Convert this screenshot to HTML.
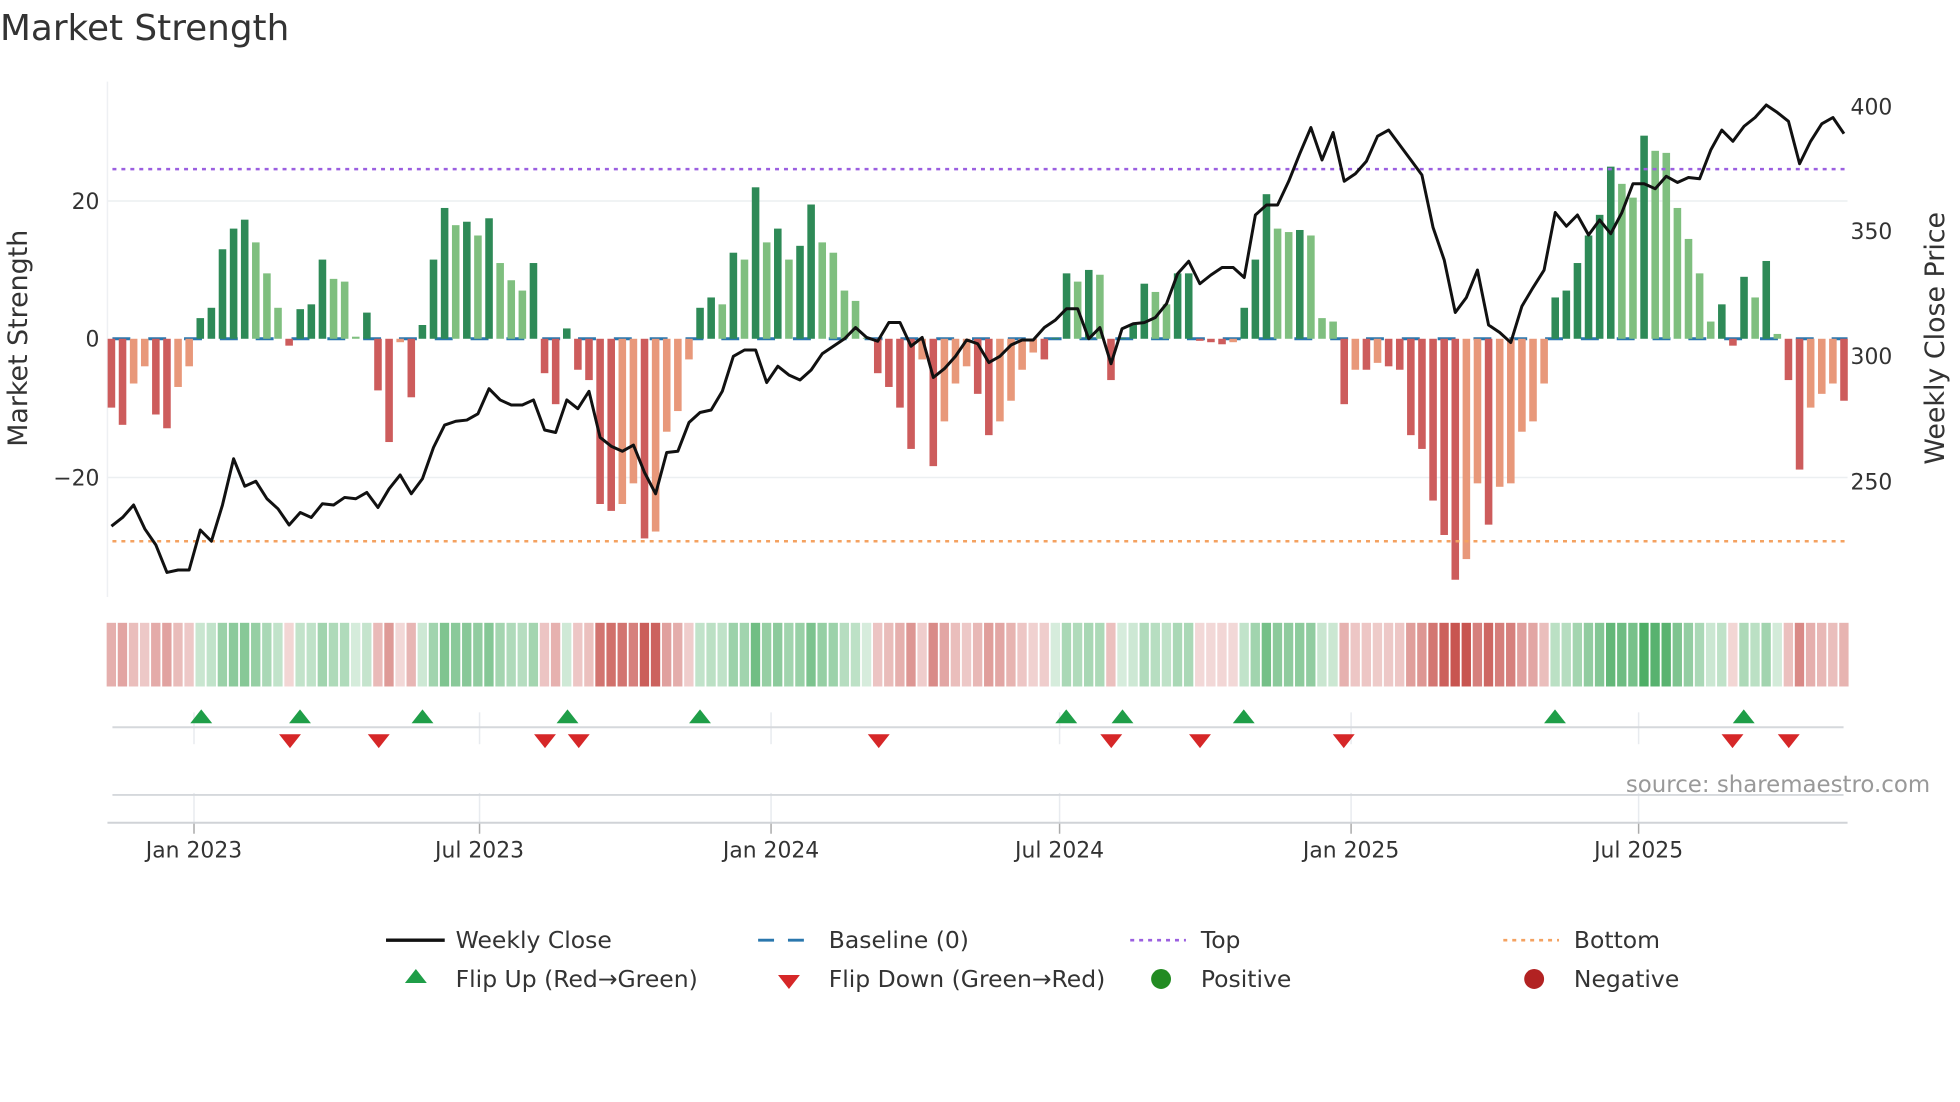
<!DOCTYPE html>
<html><head><meta charset="utf-8"><style>
html,body{margin:0;padding:0;background:#fff;width:1960px;height:1102px;overflow:hidden}
svg{display:block}
text{font-family:"DejaVu Sans","Liberation Sans",sans-serif;fill:#333}
</style></head><body>
<svg id="s" width="1960" height="1102" viewBox="0 0 1960 1102" xmlns="http://www.w3.org/2000/svg">
<g transform="scale(0.99491)">
<text x="0" y="40" font-size="36">Market Strength</text>
<text transform="translate(27,340) rotate(-90)" text-anchor="middle" font-size="27" fill="#444">Market Strength</text>
<text transform="translate(1954,340) rotate(-90)" text-anchor="middle" font-size="27" fill="#444">Weekly Close Price</text>
<text x="1940" y="796" text-anchor="end" font-size="23" fill="#999" style="fill:#999">source: sharemaestro.com</text>
<g id="g"></g>
</g>
</svg>
<script>
var S=1.2564,NS="http://www.w3.org/2000/svg",G=document.getElementById('g');
function el(t,a,txt){var e=document.createElementNS(NS,t);for(var k in a)e.setAttribute(k,a[k]);if(txt!=null)e.textContent=txt;G.appendChild(e);return e;}
var V=[-10,-12.5,-6.5,-4,-11,-13,-7,-4,3,4.5,13,16,17.3,14,9.5,4.5,-1,4.3,5,11.5,8.7,8.3,0.3,3.8,-7.5,-15,-0.5,-8.5,2,11.5,19,16.5,17,15,17.5,11,8.5,7,11,-5,-9.5,1.5,-4.5,-6,-24,-25,-24,-21,-29,-28,-13.5,-10.5,-3,4.5,6,5,12.5,11.5,22,14,16,11.5,13.5,19.5,14,12.5,7,5.5,0,-5,-7,-10,-16,-3,-18.5,-12,-6.5,-4,-8,-14,-12,-9,-4.5,-2,-3,0,9.5,8.3,10,9.3,-6,0,2,8,6.8,5,9.5,9.5,-0.3,-0.5,-0.8,-0.5,4.5,11.5,21,16,15.5,15.8,15,3,2.5,-9.5,-4.5,-4.5,-3.5,-4,-4.5,-14,-16,-23.5,-28.5,-35,-32,-21,-27,-21.5,-21,-13.5,-12,-6.5,6,7,11,15,18,25,22.5,20.5,29.5,27.3,27,19,14.5,9.5,2.5,5,-1,9,6,11.3,0.7,-6,-19,-10,-8,-6.5,-9];
var P=[421,414,404,423,436,458,456,456,424,433,404,367,389,385,399,407,420,410,414,403,404,398,399,394,406,391,380,395,383,358,340,337,336,331,311,320,324,324,320,344,346,320,327,313,350,357,361,356,378,395,362,361,338,330,328,313,285,280,280,306,293,300,304,296,283,277,271,262,270,273,258,258,277,270,302,295,285,272,275,290,285,276,272,272,262,256,247,247,271,262,291,263,259,258,254,243,219,209,227,220,214,214,222,172,164,164,145,123,102,128,106,145,139,129,109,104,116,128,140,182,208,250,238,216,260,266,274,245,230,216,170,181,172,188,176,187,170,147,147,151,141,146,142,143,120,104,113,101,94,84,90,97,131,113,99,94,107];
var X0=112,DX=11.163,Z=340.5,U=6.92,L=108,R=1857;
function xi(i){return X0+DX*i;}
[202,480].forEach(function(y){el('line',{x1:L,x2:R,y1:y,y2:y,stroke:'#eceff1','stroke-width':1.5});});
el('line',{x1:L,x2:L,y1:82,y2:600,stroke:'#eef0f3','stroke-width':1.5});
el('line',{x1:L+5,x2:R,y1:Z,y2:Z,stroke:'#2a77ad','stroke-width':3,'stroke-dasharray':'18 18'});
for(var i=0;i<V.length;i++){var v=V[i],p=i?V[i-1]:0,c;
 if(v>=0)c=(i==0||v>=p)?'#2e8a57':'#7fbf7f';else c=(i==0||v<=p)?'#cd5c5c':'#e8987a';
 var h=Math.abs(v)*U;if(h<1)h=1;
 el('rect',{x:xi(i)-3.8,y:v>=0?Z-h:Z,width:7.6,height:h,fill:c});
 var a=Math.min(1,0.22+Math.abs(v)/30*0.75);
 el('rect',{x:xi(i)-4.8,y:626,width:9.4,height:64,fill:v>=0?'rgb(70,170,95)':'rgb(200,85,80)','fill-opacity':a});
}
el('line',{x1:L+5,x2:R,y1:170,y2:170,stroke:'#9b5fe0','stroke-width':2.6,'stroke-dasharray':'4 5'});
el('line',{x1:L+5,x2:R,y1:544,y2:544,stroke:'#f4a261','stroke-width':2.6,'stroke-dasharray':'4 5'});
var pts=P.map(function(y,i){return xi(i).toFixed(1)+','+(y*S).toFixed(1);}).join(' ');
el('polyline',{points:pts,fill:'none',stroke:'#111','stroke-width':3,'stroke-linejoin':'round'});
[[202,'20'],[340.5,'0'],[480,'\u221220']].forEach(function(t){el('text',{x:100,y:t[0]+8,'text-anchor':'end','font-size':22},t[1]);});
[[107,'400'],[232,'350'],[358,'300'],[484,'250']].forEach(function(t){el('text',{x:1860,y:t[0]+8,'font-size':22},t[1]);});
var TX=[195,482,775,1065,1358,1647],TL=['Jan 2023','Jul 2023','Jan 2024','Jul 2024','Jan 2025','Jul 2025'];
TX.forEach(function(x,k){el('line',{x1:x,x2:x,y1:716,y2:748,stroke:'#e8ebef','stroke-width':1.5});el('line',{x1:x,x2:x,y1:797,y2:827,stroke:'#e8ebef','stroke-width':1.5});
 el('line',{x1:x,x2:x,y1:827,y2:838,stroke:'#aaa','stroke-width':1.5});el('text',{x:x,y:862,'text-anchor':'middle','font-size':22},TL[k]);});
el('line',{x1:113,x2:1853,y1:731,y2:731,stroke:'#d5d8dc','stroke-width':2});
el('line',{x1:113,x2:1853,y1:799,y2:799,stroke:'#d5d8dc','stroke-width':2});
el('line',{x1:108,x2:1857,y1:827,y2:827,stroke:'#d0d3d7','stroke-width':2});
function up(x,y,c){el('polygon',{points:(x-11)+','+(y+7)+' '+(x+11)+','+(y+7)+' '+x+','+(y-7),fill:c});}
function dn(x,y,c){el('polygon',{points:(x-11)+','+(y-7)+' '+(x+11)+','+(y-7)+' '+x+','+(y+7),fill:c});}
[161,240,338,454,560,853,898,995,1244,1395].forEach(function(x){up(x*S,720,'#1f9e48');});
[232,303,436,463,703,889,960,1075,1386,1431].forEach(function(x){dn(x*S,745,'#d62728');});
var r1=945,r2=984,F=23.6;
el('line',{x1:388,x2:447,y1:r1,y2:r1,stroke:'#111','stroke-width':3.5});
el('text',{x:458,y:r1+8,'font-size':F},'Weekly Close');
el('line',{x1:762,x2:820,y1:r1,y2:r1,stroke:'#2a77ad','stroke-width':3,'stroke-dasharray':'16 14'});
el('text',{x:833,y:r1+8,'font-size':F},'Baseline (0)');
el('line',{x1:1136,x2:1192,y1:r1,y2:r1,stroke:'#9b5fe0','stroke-width':2.6,'stroke-dasharray':'4 5'});
el('text',{x:1207,y:r1+8,'font-size':F},'Top');
el('line',{x1:1511,x2:1567,y1:r1,y2:r1,stroke:'#f4a261','stroke-width':2.6,'stroke-dasharray':'4 5'});
el('text',{x:1582,y:r1+8,'font-size':F},'Bottom');
up(418,r2-3,'#1f9e48');el('text',{x:458,y:r2+8,'font-size':F},'Flip Up (Red\u2192Green)');
dn(793,r2+3,'#d62728');el('text',{x:833,y:r2+8,'font-size':F},'Flip Down (Green\u2192Red)');
el('circle',{cx:1167,cy:r2,r:10,fill:'#228b22'});el('text',{x:1207,y:r2+8,'font-size':F},'Positive');
el('circle',{cx:1542,cy:r2,r:10,fill:'#b22222'});el('text',{x:1582,y:r2+8,'font-size':F},'Negative');
</script>
</body></html>
